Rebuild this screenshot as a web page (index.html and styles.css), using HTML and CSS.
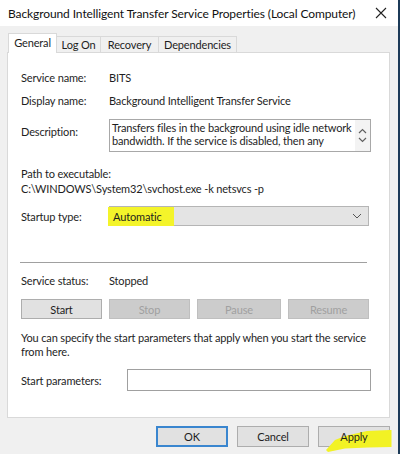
FILE: index.html
```html
<!DOCTYPE html>
<html lang="en">
<head>
    <meta charset="UTF-8">
    <title>Background Intelligent Transfer Service Properties (Local Computer)</title>
    <link rel="stylesheet" href="styles.css">
</head>
<body>
<div class="window">
    <div class="titlebar">
        <span class="title">Background Intelligent Transfer Service Properties (Local Computer)</span>
        <svg class="close" width="12" height="12" viewBox="0 0 12 12">
            <path d="M1 1 L11 11 M11 1 L1 11" stroke="#222" stroke-width="1.1" fill="none"/>
        </svg>
    </div>

    <!-- tabs -->
    <div class="tabs">
        <div class="tab active">General</div>
        <div class="tab tab-logon">Log On</div>
        <div class="tab tab-recovery">Recovery</div>
        <div class="tab tab-deps">Dependencies</div>
    </div>

    <div class="panel">
        <div class="row">
            <span class="label">Service name:</span>
            <span>BITS</span>
        </div>
        <div class="row row-display">
            <span class="label">Display name:</span>
            <span>Background Intelligent Transfer Service</span>
        </div>
        <div class="row row-desc">
            <span class="label">Description:</span>
            <div class="textbox">
                <div class="textbox-text">Transfers files in the background using idle network bandwidth. If the service is disabled, then any</div>
                <div class="scroll">
                    <svg width="9" height="6" viewBox="0 0 9 6"><path d="M1 5 L4.5 1.5 L8 5" stroke="#606060" stroke-width="1.2" fill="none"/></svg>
                    <svg width="9" height="6" viewBox="0 0 9 6"><path d="M1 1 L4.5 4.5 L8 1" stroke="#606060" stroke-width="1.2" fill="none"/></svg>
                </div>
            </div>
        </div>

        <div class="path">
            <div>Path to executable:</div>
            <div>C:\WINDOWS\System32\svchost.exe -k netsvcs -p</div>
        </div>

        <div class="row row-startup">
            <span class="label">Startup type:</span>
            <div class="select">
                <span class="mark">Automatic</span>
                <svg width="10" height="6" viewBox="0 0 10 6"><path d="M1 1 L5 5 L9 1" stroke="#555" stroke-width="1" fill="none"/></svg>
            </div>
        </div>

        <hr class="separator">

        <div class="row row-status">
            <span class="label">Service status:</span>
            <span>Stopped</span>
        </div>

        <div class="service-buttons">
            <button class="btn">Start</button>
            <button class="btn" disabled>Stop</button>
            <button class="btn" disabled>Pause</button>
            <button class="btn" disabled>Resume</button>
        </div>

        <p class="hint">You can specify the start parameters that apply when you start the service from here.</p>

        <div class="row row-params">
            <span class="label">Start parameters:</span>
            <div class="input"></div>
        </div>
    </div>

    <div class="footer">
        <button class="btn btn-default">OK</button>
        <button class="btn">Cancel</button>
        <button class="btn btn-apply">
            <svg class="marker" width="76" height="28" viewBox="0 0 76 28">
                <path d="M27 10 L49 5 L72 4 L73.5 4 L73.5 21 L50 21.5 L27 22.5 L10 26 L8 24 L17 14 Z" fill="#f2f224"/>
            </svg>
            <span class="btn-label">Apply</span>
        </button>
    </div>
</div>
</body>
</html>
```

FILE: styles.css
```css
body {
    margin: 0;
    background-color: #f0f0f0;
    font-family: Lato, "Liberation Sans", sans-serif;
    font-size: 11px;
    letter-spacing: -0.15px;
    color: #1e1e1e;
}

.window {
    width: 398px;
    height: 454px;
    border-right: 2px solid #1c3a58;
    background-color: #f0f0f0;
}

.titlebar {
    height: 26px;
    background-color: white;
    display: flex;
    align-items: center;
    justify-content: space-between;
    padding: 0 11px 0 8px;
}

.title {
    font-size: 12px;
    letter-spacing: -0.1px;
    color: #111;
    white-space: nowrap;
}

.tabs {
    display: flex;
    align-items: flex-end;
    margin-top: 8px;
    padding-left: 8px;
    height: 18px;
}

.tab {
    height: 15px;
    line-height: 15px;
    text-align: center;
    border: 1px solid #d9d9d9;
    border-bottom: none;
    border-left: none;
    background-color: #f0f0f0;
}

.tab.active {
    width: 47px;
    height: 19px;
    line-height: 17px;
    background-color: white;
    border-left: 1px solid #d9d9d9;
    margin-bottom: -1px;
    position: relative;
    z-index: 1;
}

.tab-logon {
    width: 43px;
}

.tab-recovery {
    width: 57px;
}

.tab-deps {
    width: 77px;
}

.panel {
    margin: 0 8px 0 7px;
    height: 346px;
    background-color: white;
    border: 1px solid #d9d9d9;
    padding: 18px 0 0 13px;
}

.row {
    display: grid;
    grid-template-columns: 88px 1fr;
    align-items: center;
    line-height: 13px;
}

.row-display {
    margin-top: 10px;
}

.row-desc {
    margin-top: 12px;
    align-items: start;
}

.row-desc .label {
    margin-top: 6px;
}

.textbox {
    width: 260px;
    height: 31px;
    border: 1px solid #a8a8a8;
    display: flex;
    justify-content: space-between;
}

.textbox-text {
    width: 242px;
    padding: 1px 0 0 2px;
}

.scroll {
    width: 15px;
    background-color: #f3f3f3;
    display: flex;
    flex-direction: column;
    align-items: center;
    justify-content: center;
    gap: 3px;
}

.path {
    margin-top: 14px;
    line-height: 15px;
}

.row-startup {
    margin-top: 10px;
}

.select {
    width: 252px;
    height: 18px;
    border: 1px solid #b5b5b5;
    background-color: #e4e4e4;
    display: flex;
    align-items: center;
    justify-content: space-between;
    padding: 0 6px 0 0;
}

.mark {
    background-color: #f4f42a;
    padding: 3px 12px 3px 5px;
    margin-left: -2px;
}

.separator {
    width: 347px;
    margin: 36px 0 0 -1px;
    border: none;
    border-top: 1px solid #a0a0a0;
}

.row-status {
    margin-top: 11px;
}

.service-buttons {
    display: flex;
    gap: 7px;
    margin-top: 12px;
}

button.btn {
    width: 81px;
    height: 20px;
    padding: 0;
    font-family: inherit;
    font-size: 11px;
    letter-spacing: -0.15px;
    color: #1e1e1e;
    background-color: #e1e1e1;
    border: 1px solid #adadad;
}

.service-buttons .btn:nth-child(3) {
    width: 84px;
}

button.btn:disabled {
    background-color: #cccccc;
    border-color: #bfbfbf;
    color: #a0a0a0;
}

.hint {
    margin: 12px 0 0;
    width: 356px;
    line-height: 13.5px;
}

.row-params {
    grid-template-columns: 106px 1fr;
    margin-top: 11px;
}

.input {
    width: 242px;
    height: 20px;
    border: 1px solid #a0a0a0;
}

.footer {
    display: flex;
    justify-content: flex-end;
    gap: 9px;
    padding: 8px 8px 0 0;
}

.footer .btn {
    width: 72px;
    height: 21px;
}

.footer .btn-default {
    border: 2px solid #3a86cf;
}

.btn-apply {
    position: relative;
}

.btn-label {
    position: relative;
}

.marker {
    position: absolute;
    left: -1px;
    top: -1px;
    overflow: visible;
}
```
